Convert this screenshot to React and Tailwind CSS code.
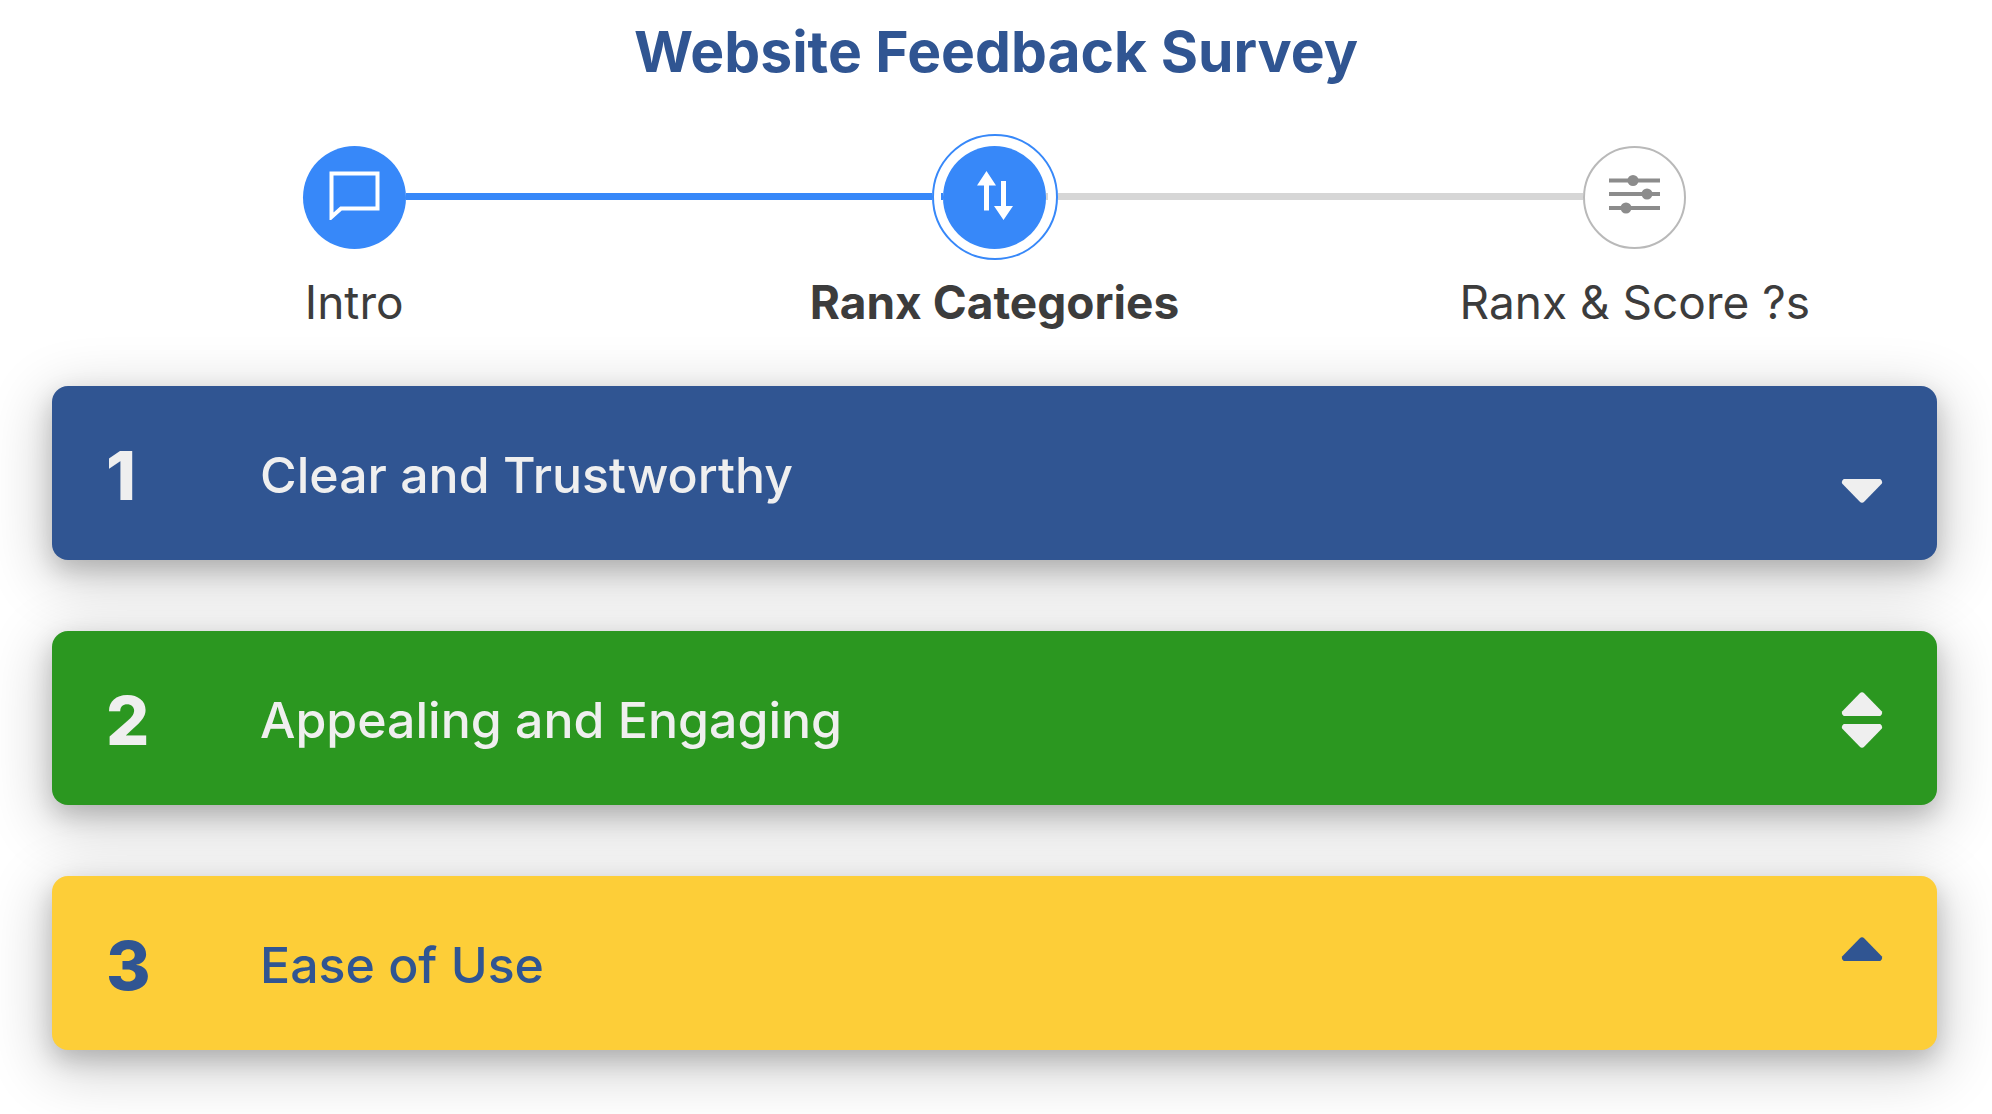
import React, { useState } from 'react';
import clsx from 'clsx';

const ChatIcon = () => (
  <svg width="51" height="49" viewBox="0 0 51 49" fill="none" stroke="currentColor" strokeWidth="4" aria-hidden="true">
    <path d="M2.5 2.5H48.5V37.5H12L2.5 46Z" />
  </svg>
);

const SwapIcon = () => (
  <svg width="36" height="49" viewBox="0 0 36 49" fill="currentColor" aria-hidden="true">
    <path d="M9.5 0L19 14.5H12V39.5H7V14.5H0Z" />
    <path d="M26.5 49L17 35H24V10H29V35H36Z" />
  </svg>
);

const SlidersIcon = () => (
  <svg width="51" height="49" viewBox="0 0 51 49" fill="currentColor" aria-hidden="true">
    <path d="M0 7.5H51V11.5H0ZM0 21H51V25H0ZM0 35H51V39H0Z" />
    <circle cx="24" cy="9.5" r="5.5" />
    <circle cx="38" cy="23" r="5.5" />
    <circle cx="17" cy="37" r="5.5" />
  </svg>
);

const steps = [
  { label: 'Intro', icon: ChatIcon, state: 'done' },
  { label: 'Ranx Categories', icon: SwapIcon, state: 'current' },
  { label: 'Ranx & Score ?s', icon: SlidersIcon, state: 'todo' },
];

const initialCategories = [
  { title: 'Clear and Trustworthy', color: 'bg-[#305592] text-[#efefef]' },
  { title: 'Appealing and Engaging', color: 'bg-[#2b9720] text-[#efefef]' },
  { title: 'Ease of Use', color: 'bg-[#fdce38] text-[#305592]' },
];

const Line = ({ color }) => <span className={clsx('mb-0.5 h-[7px] flex-1', color)} />;

const Step = ({ label, icon: Icon, state, before, after }) => {
  const current = state === 'current';
  const circle = (
    <span
      className={clsx(
        'flex size-[103px] shrink-0 items-center justify-center rounded-full pb-1',
        state === 'todo' ? 'border-2 border-[#b9b9b9] text-[#8c8c8c]' : 'bg-[#3788f9] text-white'
      )}
    >
      <Icon />
    </span>
  );

  return (
    <li className="flex flex-col items-center" aria-current={current ? 'step' : undefined}>
      <div className="flex h-[126px] w-full items-center">
        <Line color={before} />
        {current ? (
          <span className="flex size-[126px] shrink-0 items-center justify-center rounded-full border-2 border-[#3788f9]">
            <span className="mb-0.5 h-[7px] w-0.5 bg-[#3788f9]" />
            {circle}
            <span className="mb-0.5 h-[7px] w-0.5 bg-[#d6d6d6]" />
          </span>
        ) : circle}
        <Line color={after} />
      </div>
      <span className={clsx('mt-3 whitespace-nowrap text-[46px] leading-[60px] text-[#3c3c3c]', current && 'font-bold')}>
        {label}
      </span>
    </li>
  );
};

const Arrow = ({ down, label, onClick }) => (
  <button type="button" aria-label={label} onClick={onClick} className="cursor-pointer">
    <svg width="42" height="24" viewBox="0 0 43 25" fill="currentColor" aria-hidden="true">
      {down
        ? <path d="M2.5 0H40.5Q43.5 2 42 5L24 23.5Q21.5 26 19 23.5L1 5Q-.5 2 2.5 0Z" />
        : <path d="M2.5 25H40.5Q43.5 23 42 20L24 1.5Q21.5 -1 19 1.5L1 20Q-.5 23 2.5 25Z" />}
    </svg>
  </button>
);

const App = () => {
  const [categories, setCategories] = useState(initialCategories);

  const move = (from, to) => {
    const next = [...categories];
    next.splice(to, 0, next.splice(from, 1)[0]);
    setCategories(next);
  };

  return (
    <main className="min-h-screen overflow-hidden bg-white pb-16 pt-5 font-['Inter',sans-serif]">
      <h1 className="text-center text-[57px] font-bold leading-[64px] text-[#305592]">Website Feedback Survey</h1>

      <ol className="mt-[50px] grid grid-cols-3 pl-[34px] pr-[37px]">
        <Step {...steps[0]} before="bg-transparent" after="bg-[#3788f9]" />
        <Step {...steps[1]} before="bg-[#3788f9]" after="bg-[#d6d6d6]" />
        <Step {...steps[2]} before="bg-[#d6d6d6]" after="bg-transparent" />
      </ol>

      <ul className="mt-[54px] flex flex-col gap-[71px] pl-[52px] pr-[55px]">
        {categories.map((category, i) => (
          <li
            key={category.title}
            className={clsx(
              'flex h-[174px] items-center rounded-2xl pl-[54px] pr-[54px] pt-1 shadow-[0_10px_25px_rgba(0,0,0,0.18),0_15px_60px_6px_rgba(0,0,0,0.2)]',
              category.color
            )}
          >
            <span className="w-[154px] text-[68px] font-extrabold leading-[80px]">{i + 1}</span>
            <span className="flex-1 text-[50px] font-medium leading-[64px]">{category.title}</span>
            <span className="flex flex-col gap-2">
              <span className="flex h-6">
                {i > 0 && <Arrow label={`Move ${category.title} up`} onClick={() => move(i, i - 1)} />}
              </span>
              <span className="flex h-6">
                {i < categories.length - 1 && <Arrow down label={`Move ${category.title} down`} onClick={() => move(i, i + 1)} />}
              </span>
            </span>
          </li>
        ))}
      </ul>
    </main>
  );
};

export default App;
